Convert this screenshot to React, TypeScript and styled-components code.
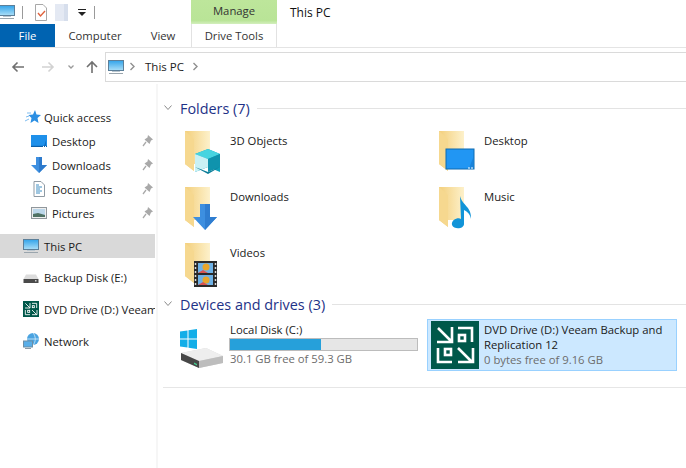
import React from 'react';
import styled, { createGlobalStyle } from 'styled-components';

const GlobalStyle = createGlobalStyle`
  html, body {
    margin: 0;
    padding: 0;
    background: #fff;
  }
`;

const Window = styled.div`
  width: 686px;
  height: 468px;
  overflow: hidden;
  display: flex;
  flex-direction: column;
  background: #fff;
  color: #1a1a1a;
  font-family: "Open Sans", "Liberation Sans", sans-serif;
  font-size: 11.3px;
`;

const Ribbon = styled.div`
  height: 47px;
  flex: none;
  border-bottom: 1px solid #e4e4e4;
`;

const TitleRow = styled.div`
  height: 24px;
  display: flex;
`;

const QuickBar = styled.div`
  width: 191px;
  display: flex;
  align-items: center;
  overflow: hidden;
`;

const Divider = styled.span<{ $gap: number }>`
  width: 1px;
  height: 13px;
  background: #9a9a9a;
  margin-left: ${p => p.$gap}px;
`;

const IconSlot = styled.span<{ $left: number }>`
  display: flex;
  flex: none;
  margin-left: ${p => p.$left}px;
`;

const ContextHeader = styled.div`
  width: 86px;
  display: flex;
  align-items: center;
  justify-content: center;
  color: #333;
  padding-bottom: 3px;
  box-sizing: border-box;
  background: linear-gradient(#bde69b, #b9e497 85%, #d3efbd);
`;

const WindowTitle = styled.div`
  padding-left: 13px;
  display: flex;
  align-items: center;
  font-size: 12px;
  color: #111;
`;

const TabRow = styled.div`
  height: 23px;
  display: flex;
`;

const Tab = styled.div<{ $width: number; $file?: boolean; $context?: boolean }>`
  width: ${p => p.$width}px;
  display: flex;
  align-items: center;
  justify-content: center;
  box-sizing: border-box;
  color: ${p => (p.$file ? '#fff' : '#333')};
  background: ${p => (p.$file ? '#0063b1' : 'transparent')};
  border-left: ${p => (p.$context ? '1px solid #e2e2e2' : 'none')};
  border-right: ${p => (p.$context ? '1px solid #e2e2e2' : 'none')};
`;

const Toolbar = styled.div`
  height: 36px;
  flex: none;
  display: flex;
  align-items: center;
  padding-top: 1px;
  box-sizing: border-box;
`;

const NavButtons = styled.div`
  width: 105px;
  height: 30px;
  flex: none;
  display: flex;
  align-items: center;
  padding-left: 11px;
  box-sizing: border-box;
`;

const AddressBar = styled.div`
  flex: 1;
  height: 30px;
  display: flex;
  align-items: center;
  padding-left: 2px;
  box-sizing: border-box;
  border: 1px solid #dadada;
  border-right: none;
  color: #222;
`;

const Crumb = styled.span`
  margin: 0 8px 0 9px;
  font-size: 11.5px;
`;

const Body = styled.div`
  flex: 1;
  display: flex;
  min-height: 0;
`;

const Sidebar = styled.nav`
  width: 158px;
  flex: none;
  box-sizing: border-box;
  padding-top: 21px;
  border-right: 2px solid #f6f6f6;
  display: flex;
  flex-direction: column;
`;

const NavRow = styled.div<{ $indent: number; $selected?: boolean; $top?: number }>`
  width: 155px;
  height: 24px;
  flex: none;
  display: flex;
  align-items: center;
  box-sizing: border-box;
  padding-left: ${p => p.$indent}px;
  margin-top: ${p => p.$top ?? 0}px;
  background: ${p => (p.$selected ? '#d9d9d9' : 'transparent')};
  position: relative;
  white-space: nowrap;
  overflow: hidden;
`;

const NavIcon = styled.span<{ $gap: number }>`
  width: 16px;
  height: 16px;
  margin-right: ${p => p.$gap}px;
  flex: none;
  display: flex;
`;

const PinSlot = styled.span`
  position: absolute;
  left: 142px;
  top: 5px;
  display: flex;
`;

const Main = styled.main`
  flex: 1;
  min-width: 0;
  padding-top: 15px;
  display: flex;
  flex-direction: column;
`;

const SectionHeader = styled.div`
  height: 18px;
  flex: none;
  display: flex;
  align-items: center;
  padding-left: 6px;
`;

const SectionTitle = styled.h2`
  margin: 0 7px 0 8px;
  font-size: 14.4px;
  font-weight: 400;
  color: #1e3287;
  white-space: nowrap;
`;

const SectionLine = styled.span`
  flex: 1;
  height: 1px;
  background: #e3e3e3;
`;

const FolderGrid = styled.div`
  margin: 10px 0 0 23px;
  display: grid;
  grid-template-columns: 254px 254px;
  grid-auto-rows: 56px;
`;

const FolderItem = styled.div`
  display: flex;
  gap: 1px;
`;

const FolderName = styled.span`
  padding-top: 5px;
  line-height: 18px;
`;

const DriveGrid = styled.div`
  margin: 6px 0 0 15px;
  display: grid;
  grid-template-columns: 254px 250px;
`;

const DriveItem = styled.div<{ $selected?: boolean }>`
  height: 52px;
  box-sizing: border-box;
  padding: 1px 3px;
  display: flex;
  gap: 5px;
  border: 1px solid ${p => (p.$selected ? '#99d1ff' : 'transparent')};
  background: ${p => (p.$selected ? '#cce8ff' : 'transparent')};
`;

const DriveText = styled.div`
  padding-top: 1px;
  line-height: 15px;
  min-width: 0;
  flex: 1;
`;

const DriveSub = styled.div`
  color: #6d6d6d;
`;

const UsageBar = styled.div`
  width: 189px;
  height: 13px;
  margin: 1px 0 0 -1px;
  box-sizing: border-box;
  border: 1px solid #bcbcbc;
  background: #e6e6e6;
`;

const UsageFill = styled.div`
  height: 100%;
  background: #26a0da;
`;

const BottomLine = styled.div`
  height: 1px;
  margin: 16px 0 0 5px;
  background: #e6e6e6;
`;

const IconSvg = styled.svg`
  display: block;
  flex: none;
`;

const Svg: React.FC<{ w?: number; h?: number; vb?: string; children: React.ReactNode }> = ({ w = 16, h = 16, vb, children }) => (
  <IconSvg width={w} height={h} viewBox={vb ?? `0 0 ${w} ${h}`} fill="none">
    {children}
  </IconSvg>
);

const PcIcon = () => (
  <Svg>
    <rect x="0.5" y="1.5" width="15" height="10" fill="#4db2ec" stroke="#5c7f99" />
    <rect x="1" y="2" width="14" height="9" fill="url(#pcGrad)" />
    <defs>
      <linearGradient id="pcGrad" x1="0" y1="0" x2="0" y2="1">
        <stop offset="0" stopColor="#38a6ea" />
        <stop offset="1" stopColor="#a5dcf7" />
      </linearGradient>
    </defs>
    <rect x="4" y="12" width="8" height="1" fill="#b9c6cf" />
    <rect x="1" y="14" width="14" height="1" fill="#9aa5ad" />
  </Svg>
);

const DesktopSmall = () => (
  <Svg>
    <rect x="0" y="2" width="16" height="12" fill="#1e90ea" />
    <path d="M1 13 L13 13 L15 7 L15 13 Z" fill="#0f6fc4" />
    <rect x="0" y="12.8" width="16" height="1.2" fill="#0b5fa8" />
    <rect x="12" y="13" width="1" height="1" fill="#fff" />
    <rect x="14" y="13" width="1" height="1" fill="#fff" />
  </Svg>
);

const DownArrowSmall = () => (
  <Svg>
    <path d="M5 0 H11 V8 H16 L8 16 L0 8 H5 Z" fill="#3d8fe0" />
    <path d="M8 0 H11 V8 H16 L8 16 Z" fill="#2d7acc" />
  </Svg>
);

const DocumentSmall = () => (
  <Svg>
    <path d="M3 0.5 H10 L13.5 4 V15.5 H3 Z" fill="#fff" stroke="#8f9aa3" />
    <path d="M5 4 H8 M5 6 H11 M5 8 H9 M5 10 H11 M5 12 H9" stroke="#3f8ec2" />
  </Svg>
);

const PictureSmall = () => (
  <Svg>
    <rect x="0.5" y="2.5" width="15" height="11" fill="#eee" stroke="#90979c" />
    <rect x="2" y="4" width="12" height="8" fill="#bcd7ea" />
    <path d="M2 9 L7 8 L14 10 V12 H2 Z" fill="#4f7264" />
  </Svg>
);

const QuickStar = () => (
  <Svg>
    <path d="M10 1 L11.5 5.5 L16 6 L12.5 9 L13.5 14 L9.5 11.5 L5.5 14 L6.5 9 L3.5 6 L8 5.5 Z" fill="#2b8fe3" />
    <path d="M0 12 L4 10 M1 8 L4 7 M2 4 L6 4" stroke="#7fbdf0" strokeWidth="1" />
  </Svg>
);

const HddSmall = () => (
  <Svg>
    <path d="M3 5.5 H13 L15.5 10 H0.5 Z" fill="#dcdcdc" />
    <rect x="0.5" y="10" width="15" height="4" fill="#4a4a4a" />
    <rect x="12" y="11" width="1.5" height="1.5" fill="#cfcfcf" />
  </Svg>
);

const VeeamGlyph: React.FC<{ size: number }> = ({ size }) => (
  <Svg w={size} h={size} vb="0 0 48 48">
    <rect width="48" height="48" fill="#00584a" />
    <g stroke="#fff" strokeWidth="2.6" fill="none">
      <path d="M7 7 L21 21 M6 21 H21 V6" />
      <path d="M27 7 H41 V21" />
      <rect x="28" y="14" width="6" height="6" />
      <path d="M21 41 H7 V27" />
      <rect x="14" y="28" width="6" height="6" />
      <path d="M27 27 L41 41 M42 27 V41 H27" />
    </g>
  </Svg>
);

const NetworkSmall = () => (
  <Svg>
    <circle cx="10" cy="6" r="6" fill="#4aa3e0" />
    <path d="M10 0 C13 3 13 9 10 12 M4 6 H16" stroke="#d8eefb" strokeWidth="0.8" />
    <rect x="0.5" y="8" width="9" height="6" fill="#59aee8" stroke="#6d8ea5" />
    <rect x="2" y="15" width="6" height="1" fill="#8d9aa3" />
  </Svg>
);

const Pin = () => (
  <Svg w={12} h={14} vb="0 0 12 14">
    <path d="M6 1 L11 5.5 L9 6.5 L7.5 10 L2.5 5.5 L5.5 3.5 Z" fill="#a9a9a9" />
    <path d="M4 8 L1 12" stroke="#a9a9a9" strokeWidth="1.3" />
  </Svg>
);

const Chevron: React.FC<{ color?: string }> = ({ color = '#8f8f8f' }) => (
  <Svg w={7} h={9} vb="0 0 7 9">
    <path d="M1.5 1 L5 4.5 L1.5 8" stroke={color} strokeWidth="1.4" />
  </Svg>
);

const SectionChevron = () => (
  <Svg w={8} h={6} vb="0 0 8 6">
    <path d="M0.5 0.5 L4 4.5 L7.5 0.5" stroke="#8a8a8a" />
  </Svg>
);

const NavArrows = () => (
  <Svg w={90} h={16} vb="0 0 90 16">
    <path d="M2 8 H13 M6.5 3.5 L2 8 L6.5 12.5" stroke="#707070" strokeWidth="1.6" />
    <path d="M31 8 H42 M37.5 3.5 L42 8 L37.5 12.5" stroke="#d2d2d2" strokeWidth="1.6" />
    <path d="M57.5 6.5 L60 9 L62.5 6.5" stroke="#9a9a9a" strokeWidth="1.3" />
    <path d="M81 14 V3 M76 8 L81 3 L86 8" stroke="#707070" strokeWidth="1.6" />
  </Svg>
);

const CheckDoc = () => (
  <Svg w={14} h={17} vb="0 0 14 17">
    <path d="M1.5 0.5 H9 L12.5 4 V16.5 H1.5 Z" fill="#fff" stroke="#a8a8a8" />
    <path d="M4 9 L6.5 12 L11 7" stroke="#e0623c" strokeWidth="1.4" />
  </Svg>
);

const BlankDoc = () => (
  <Svg w={14} h={17} vb="0 0 14 17">
    <rect x="0" y="0" width="13" height="17" fill="#e4e9f3" />
    <rect x="9" y="0" width="4" height="17" fill="#d6deec" />
  </Svg>
);

const DropArrow = () => (
  <Svg w={8} h={7} vb="0 0 8 7">
    <rect x="0" y="0" width="8" height="1" fill="#222" />
    <path d="M0 3 H8 L4 7 Z" fill="#222" />
  </Svg>
);

const FolderBase: React.FC<{ id: string; children?: React.ReactNode }> = ({ id, children }) => (
  <Svg w={48} h={48} vb="0 0 48 48">
    <defs>
      <linearGradient id={id} x1="0" y1="0" x2="1" y2="0">
        <stop offset="0" stopColor="#f3cf7c" />
        <stop offset="1" stopColor="#fdf1cb" />
      </linearGradient>
    </defs>
    <path d="M4 4 H29 V37 H13 V44 L4 37 Z" fill={`url(#${id})`} />
    <path d="M4 4 L13 12 V44 L4 37 Z" fill="#f6d88f" />
    {children}
  </Svg>
);

const CubeOverlay = () => (
  <g>
    <path d="M27 22 L39 27 V45 L27 40 L14 45 V27 Z" fill="#0f9fb8" />
    <path d="M14 27 L27 22 L39 27 L27 32 Z" fill="#46d4e0" />
    <path d="M14 27 L27 32 V40 L14 45 Z" fill="#c9f1f5" />
    <path d="M27 32 L39 27 V40 L27 45 Z" fill="#0f93ad" />
    <path d="M14 40 L27 45 L39 40 L27 47 Z" fill="#0d7d98" />
  </g>
);

const DesktopOverlay = () => (
  <g>
    <rect x="11" y="22" width="28" height="20" fill="#2196f3" stroke="#0e6bb0" />
    <path d="M12 41 L34 41 L38 31 V41 Z" fill="#1a84dc" />
    <path d="M33 41 H35 M36 41 H38" stroke="#fff" />
  </g>
);

const DownloadOverlay = () => (
  <g>
    <path d="M19 21 H29 V34 H36 L24 47 L12 34 H19 Z" fill="#3d8fe0" />
    <path d="M24 21 H29 V34 H36 L24 47 Z" fill="#2f7dd0" />
  </g>
);

const MusicOverlay = () => (
  <path d="M25 13 C27 22 37 24 36 36 C35 30 31 28 29 27 V41 C29 46 19 47 17 42 C16 37 23 34 26 36 Z" fill="#1294d8" />
);

const VideoOverlay = () => (
  <g>
    <rect x="13" y="22" width="23" height="26" fill="#2a2a2a" />
    <rect x="17" y="24" width="15" height="10" fill="#6fb2e6" />
    <rect x="17" y="36" width="15" height="10" fill="#6fb2e6" />
    <circle cx="25" cy="28" r="3.5" fill="#e8a62c" />
    <circle cx="25" cy="41" r="3.5" fill="#e8a62c" />
    <path d="M17 34 L22 31 L27 34 Z M17 46 L22 43 L27 46 Z" fill="#d9534f" />
    <path d="M14.5 24 V46 M34.5 24 V46" stroke="#d8d8d8" strokeWidth="1.5" strokeDasharray="2 2" />
  </g>
);

const DiskIcon = () => (
  <Svg w={48} h={48} vb="0 0 48 48">
    <path d="M3 10.5 L10.5 9.5 V17.5 H3 Z M11.5 9.3 L20 8 V17.5 H11.5 Z M3 18.5 H10.5 V26.5 L3 25.5 Z M11.5 18.5 H20 V28 L11.5 26.7 Z" fill="#12aee8" />
    <path d="M4 32 L29 27 L46 35 V42 L22 47 L4 39 Z" fill="#d6d6d6" />
    <path d="M4 32 L29 27 L46 35 L22 40 Z" fill="#eeeeee" />
    <path d="M4 32 L22 40 V47 L4 39 Z" fill="#474747" />
    <path d="M22 40 L46 35 V42 L22 47 Z" fill="#bdbdbd" />
    <path d="M17 41.5 L20 43 V44.5 L17 43 Z" fill="#41d08f" />
  </Svg>
);

const quickAccess = [
  { label: 'Desktop', icon: <DesktopSmall /> },
  { label: 'Downloads', icon: <DownArrowSmall /> },
  { label: 'Documents', icon: <DocumentSmall /> },
  { label: 'Pictures', icon: <PictureSmall /> },
];

const folders = [
  { name: '3D Objects', overlay: <CubeOverlay /> },
  { name: 'Desktop', overlay: <DesktopOverlay /> },
  { name: 'Downloads', overlay: <DownloadOverlay /> },
  { name: 'Music', overlay: <MusicOverlay /> },
  { name: 'Videos', overlay: <VideoOverlay /> },
];

const App: React.FC = () => (
  <Window>
    <GlobalStyle />
    <Ribbon>
      <TitleRow>
        <QuickBar>
          <IconSlot $left={-1}><PcIcon /></IconSlot>
          <Divider $gap={7} />
          <IconSlot $left={11}><CheckDoc /></IconSlot>
          <IconSlot $left={7}><BlankDoc /></IconSlot>
          <IconSlot $left={9}><DropArrow /></IconSlot>
          <Divider $gap={8} />
        </QuickBar>
        <ContextHeader>Manage</ContextHeader>
        <WindowTitle>This PC</WindowTitle>
      </TitleRow>
      <TabRow>
        <Tab $width={55} $file>File</Tab>
        <Tab $width={80}>Computer</Tab>
        <Tab $width={56}>View</Tab>
        <Tab $width={86} $context>Drive Tools</Tab>
      </TabRow>
    </Ribbon>
    <Toolbar>
      <NavButtons>
        <NavArrows />
      </NavButtons>
      <AddressBar>
        <PcIcon />
        <IconSlot $left={5}><Chevron /></IconSlot>
        <Crumb>This PC</Crumb>
        <Chevron />
      </AddressBar>
    </Toolbar>
    <Body>
      <Sidebar>
        <NavRow $indent={25}>
          <NavIcon $gap={3}><QuickStar /></NavIcon>
          Quick access
        </NavRow>
        {quickAccess.map(item => (
          <NavRow key={item.label} $indent={31}>
            <NavIcon $gap={5}>{item.icon}</NavIcon>
            {item.label}
            <PinSlot><Pin /></PinSlot>
          </NavRow>
        ))}
        <NavRow $indent={23} $selected $top={9}>
          <NavIcon $gap={5}><PcIcon /></NavIcon>
          This PC
        </NavRow>
        <NavRow $indent={23} $top={7}>
          <NavIcon $gap={5}><HddSmall /></NavIcon>
          Backup Disk (E:)
        </NavRow>
        <NavRow $indent={23} $top={8}>
          <NavIcon $gap={5}><VeeamGlyph size={16} /></NavIcon>
          DVD Drive (D:) Veeam
        </NavRow>
        <NavRow $indent={23} $top={8}>
          <NavIcon $gap={5}><NetworkSmall /></NavIcon>
          Network
        </NavRow>
      </Sidebar>
      <Main>
        <SectionHeader>
          <SectionChevron />
          <SectionTitle>Folders (7)</SectionTitle>
          <SectionLine />
        </SectionHeader>
        <FolderGrid>
          {folders.map(folder => (
            <FolderItem key={folder.name}>
              <FolderBase id={`folder-${folder.name.replace(' ', '')}`}>{folder.overlay}</FolderBase>
              <FolderName>{folder.name}</FolderName>
            </FolderItem>
          ))}
        </FolderGrid>
        <SectionHeader>
          <SectionChevron />
          <SectionTitle>Devices and drives (3)</SectionTitle>
          <SectionLine />
        </SectionHeader>
        <DriveGrid>
          <DriveItem>
            <DiskIcon />
            <DriveText>
              Local Disk (C:)
              <UsageBar>
                <UsageFill style={{ width: `${(28.9 / 59.3) * 100}%` }} />
              </UsageBar>
              <DriveSub>30.1 GB free of 59.3 GB</DriveSub>
            </DriveText>
          </DriveItem>
          <DriveItem $selected>
            <VeeamGlyph size={48} />
            <DriveText>
              DVD Drive (D:) Veeam Backup and Replication 12
              <DriveSub>0 bytes free of 9.16 GB</DriveSub>
            </DriveText>
          </DriveItem>
        </DriveGrid>
        <BottomLine />
      </Main>
    </Body>
  </Window>
);

export default App;
